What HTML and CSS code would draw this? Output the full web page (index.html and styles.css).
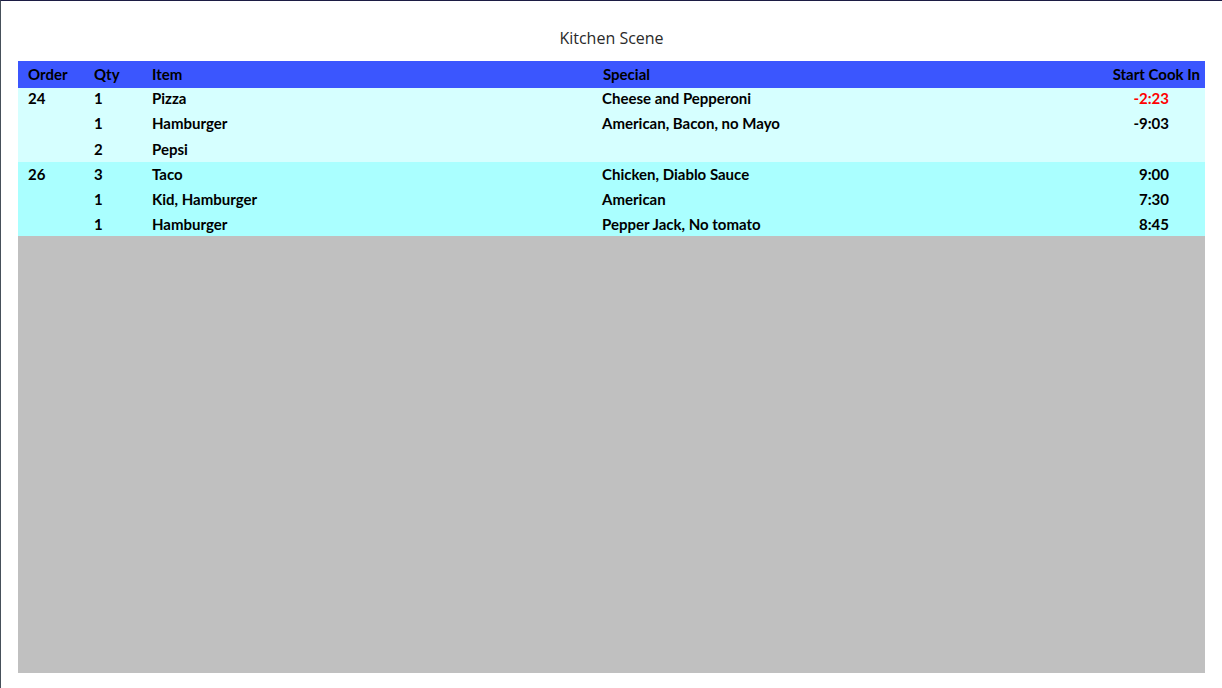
FILE: index.html
```html
<!DOCTYPE html>
<html>
<head>
<meta charset="utf-8">
<link rel="stylesheet" href="styles.css">
</head>
<body>
<div class="window">
  <header class="title-bar"><h1 class="title">Kitchen Scene</h1></header>
  <main class="board">
    <div class="row head">
      <div class="c order">Order</div>
      <div class="c qty">Qty</div>
      <div class="c item">Item</div>
      <div class="c special">Special</div>
      <div class="c time">Start Cook In</div>
    </div>
    <section class="group g1">
      <div class="row r1">
        <div class="c order">24</div><div class="c qty">1</div><div class="c item">Pizza</div>
        <div class="c special">Cheese and Pepperoni</div><div class="c time late">-2:23</div>
      </div>
      <div class="row r2">
        <div class="c order"></div><div class="c qty">1</div><div class="c item">Hamburger</div>
        <div class="c special">American, Bacon, no Mayo</div><div class="c time">-9:03</div>
      </div>
      <div class="row r3">
        <div class="c order"></div><div class="c qty">2</div><div class="c item">Pepsi</div>
        <div class="c special"></div><div class="c time"></div>
      </div>
    </section>
    <section class="group g2">
      <div class="row r1">
        <div class="c order">26</div><div class="c qty">3</div><div class="c item">Taco</div>
        <div class="c special">Chicken, Diablo Sauce</div><div class="c time">9:00</div>
      </div>
      <div class="row r2">
        <div class="c order"></div><div class="c qty">1</div><div class="c item">Kid, Hamburger</div>
        <div class="c special">American</div><div class="c time">7:30</div>
      </div>
      <div class="row r3">
        <div class="c order"></div><div class="c qty">1</div><div class="c item">Hamburger</div>
        <div class="c special">Pepper Jack, No tomato</div><div class="c time">8:45</div>
      </div>
    </section>
    <div class="empty"></div>
  </main>
</div>
</body>
</html>
```

FILE: styles.css
```css
html, body {
  margin: 0;
  padding: 0;
  background: #ffffff;
}
.window {
  width: 1222px;
  height: 688px;
  box-sizing: border-box;
  border-top: 1px solid #1c1c44;
  border-left: 1px solid #46505a;
  display: flex;
  flex-direction: column;
  overflow: hidden;
}
.title-bar {
  height: 60px;
  box-sizing: border-box;
  padding-top: 26px;
  text-align: center;
}
.title {
  margin: 0;
  font-family: "Open Sans", "Noto Sans", sans-serif;
  font-weight: 400;
  font-size: 16px;
  line-height: 22px;
  color: #2a2a2a;
}
.board {
  margin-left: 17px;
  width: 1187px;
  height: 612px;
  display: flex;
  flex-direction: column;
  font-family: "Lato", "Liberation Sans", sans-serif;
  font-weight: 700;
  font-size: 15px;
  color: #000;
}
.row {
  display: flex;
  align-items: center;
  padding-left: 10px;
  box-sizing: border-box;
}
.head {
  background: #3b56fe;
  height: 27px;
  padding-bottom: 2px;
}
.head .special { padding-left: 1px; }
.g1 { background: #d6ffff; }
.g2 { background: #aaffff; }
.group { height: 74px; display: flex; flex-direction: column; }
.group .row { height: 25px; }
.group .r1 { height: 24px; }
.g1 .r1 { padding-bottom: 4px; }
.g1 .r2 { padding-bottom: 4px; }
.g1 .r3 { padding-bottom: 1px; }
.c { white-space: nowrap; }
.order { width: 66px; }
.qty { width: 58px; }
.item { width: 450px; }
.special { flex: 1; }
.time { text-align: right; width: 200px; padding-right: 36px; }
.head .time { padding-right: 5px; }
.late { color: #ff0000; }
.empty {
  flex: 1;
  background: #c0c0c0;
}
```
